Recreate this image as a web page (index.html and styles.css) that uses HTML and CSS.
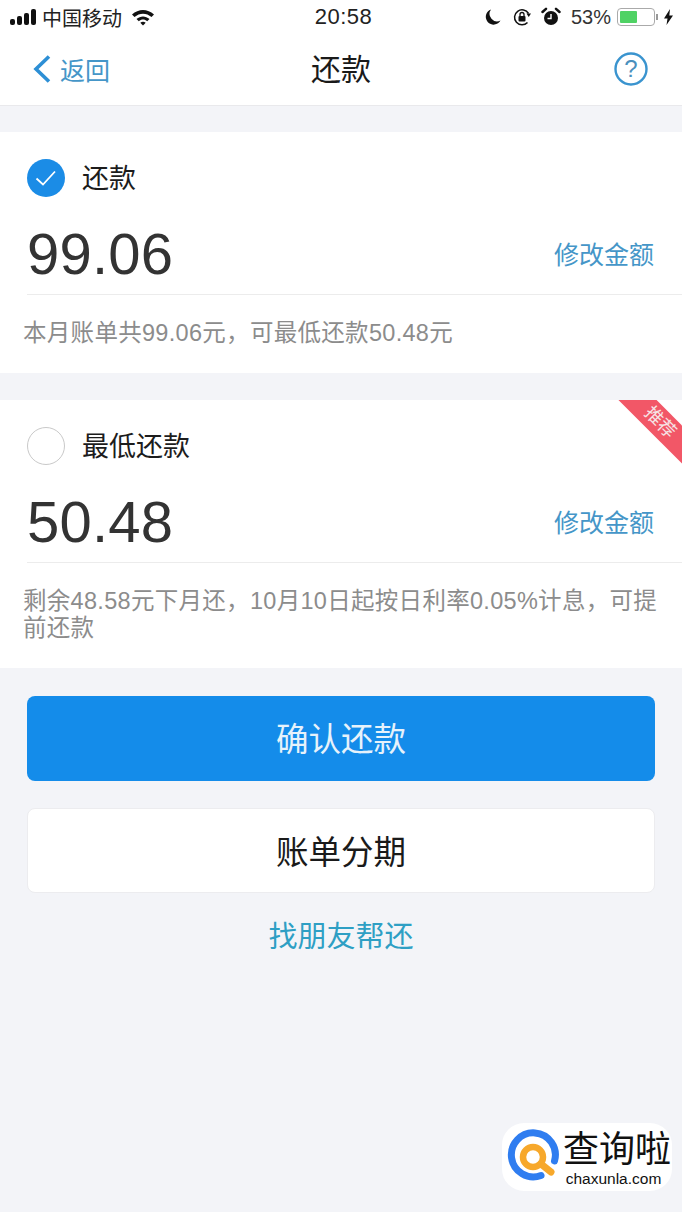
FILE: index.html
```html
<!DOCTYPE html>
<html lang="zh-CN">
<head>
    <meta charset="UTF-8">
    <title>还款</title>
    <link rel="stylesheet" href="styles.css">
</head>
<body>
<div class="statusbar">
    <div class="status-left">
        <span class="signal"><i class="b1"></i><i class="b2"></i><i class="b3"></i><i class="b4"></i></span>
        <span class="carrier">中国移动</span>
        <svg class="wifi" width="24" height="18" viewBox="0 0 24 18">
            <path d="M1 6.5C7.500 .5 16.500 .5 23 6.500L20.500 9C15.500 4.500 8.500 4.500 3.500 9Z" fill="#111"/>
            <path d="M5.500 11C9.500 7.500 14.500 7.500 18.500 11L16.200 13.300C13.500 11 10.500 11 7.800 13.300Z" fill="#111"/>
            <path d="M9.300 14.800C11 13.500 13 13.500 14.700 14.800L12 17.500Z" fill="#111"/>
        </svg>
    </div>
    <div class="status-time">20:58</div>
    <div class="status-right">
        <svg width="18" height="18" viewBox="0 0 18 18"><path d="M7 1.500A7.800 7.800 0 1 0 16.500 12.500A7.500 7.500 0 0 1 7 1.500Z" fill="#111"/></svg>
        <svg class="lock" width="20" height="20" viewBox="0 0 20 20">
            <path d="M16.500 6.500A7.500 7.500 0 1 0 15.500 15.500" fill="none" stroke="#111" stroke-width="1.500"/>
            <path d="M14.500 6.500L19 6.500L16.700 10Z" fill="#111"/>
            <rect x="6.500" y="9" width="7" height="5.500" rx="1" fill="#111"/>
            <path d="M8 9V7.500A2 2 0 0 1 12 7.500V9" fill="none" stroke="#111" stroke-width="1.300"/>
        </svg>
        <svg class="alarm" width="20" height="20" viewBox="0 0 20 20">
            <circle cx="10" cy="11" r="7" fill="#111"/>
            <path d="M10 7V11.500H6.500" fill="none" stroke="#fff" stroke-width="1.400"/>
            <path d="M1.500 5L5 1.800M18.500 5L15 1.800" stroke="#111" stroke-width="2.500" stroke-linecap="round"/>
        </svg>
        <span class="percent">53%</span>
        <span class="battery"><i></i></span>
        <span class="battery-tip"></span>
        <svg width="11" height="18" viewBox="0 0 11 18"><path d="M7 1L1 10.500H4.500L3.500 17L10 7.500H6.300Z" fill="#111"/></svg>
    </div>
</div>

<div class="navbar">
    <div class="back">
        <svg width="20" height="30" viewBox="0 0 20 30"><path d="M17 2.500L4 15L17 27.500" fill="none" stroke="#2d8fd5" stroke-width="3.600"/></svg>
        <span>返回</span>
    </div>
    <div class="nav-title">还款</div>
    <svg class="help" width="36" height="36" viewBox="0 0 36 36">
        <circle cx="18" cy="18" r="15.500" fill="none" stroke="#3a94cf" stroke-width="2.400"/>
        <text x="18" y="25.500" text-anchor="middle" class="help-mark">?</text>
    </svg>
</div>

<div class="card card-first">
    <div class="choice">
        <span class="radio checked">
            <svg width="38" height="38" viewBox="0 0 38 38"><path d="M9.500 19.500L16 25.500L28 12.500" fill="none" stroke="#fff" stroke-width="1.800"/></svg>
        </span>
        <span class="choice-name">还款</span>
    </div>
    <div class="amount-row">
        <span class="amount">99.06</span>
        <span class="edit">修改金额</span>
    </div>
    <div class="hint">本月账单共99.06元，可最低还款50.48元</div>
</div>

<div class="card card-second">
    <div class="ribbon"><span>推荐</span></div>
    <div class="choice">
        <span class="radio"></span>
        <span class="choice-name">最低还款</span>
    </div>
    <div class="amount-row">
        <span class="amount">50.48</span>
        <span class="edit">修改金额</span>
    </div>
    <div class="hint">剩余48.58元下月还，10月10日起按日利率0.05%计息，可提前还款</div>
</div>

<div class="actions">
    <div class="btn btn-primary">确认还款</div>
    <div class="btn btn-white">账单分期</div>
    <div class="friend">找朋友帮还</div>
</div>

<div class="watermark">
    <svg width="62" height="62" viewBox="0 0 62 62">
        <path d="M48.500 35A22 22 0 1 0 35 49.500" fill="none" stroke="#2f7df0" stroke-width="7" stroke-linecap="round"/>
        <circle cx="27" cy="31" r="10" fill="none" stroke="#f7a82b" stroke-width="6.500"/>
        <path d="M35 38L45 46" stroke="#f7a82b" stroke-width="7" stroke-linecap="round"/>
    </svg>
    <div class="wm-text">
        <div class="wm-name">查询啦</div>
        <div class="wm-url">chaxunla.com</div>
    </div>
</div>
</body>
</html>
```

FILE: styles.css
```css
* {
    box-sizing: border-box;
}

html, body {
    margin: 0;
    padding: 0;
}

body {
    position: relative;
    width: 682px;
    height: 1212px;
    overflow: hidden;
    background: #f3f4f8;
    color: #111;
    font-family: "Liberation Sans", "Noto Sans CJK SC", sans-serif;
}

/* status bar */
.statusbar {
    display: flex;
    justify-content: space-between;
    align-items: center;
    height: 34px;
    padding: 0 8px 0 10px;
    background: #fff;
    font-size: 20px;
    position: relative;
}

.status-left, .status-right {
    display: flex;
    align-items: center;
}

.signal {
    display: flex;
    align-items: flex-end;
    gap: 2px;
    height: 16px;
    margin-right: 6px;
}

.signal i {
    display: block;
    width: 5px;
    background: #111;
    border-radius: 2px;
}

.signal .b1 { height: 6px; }
.signal .b2 { height: 9px; }
.signal .b3 { height: 12px; }
.signal .b4 { height: 16px; }

.carrier {
    font-size: 20px;
    color: #222;
}

.wifi {
    margin-left: 9px;
}

.status-time {
    position: absolute;
    left: 5px;
    right: 0;
    text-align: center;
    font-size: 22px;
    letter-spacing: .5px;
    color: #222;
}

.status-right svg {
    margin-left: 8px;
}

.status-right .lock {
    margin-left: 10px;
}

.status-right .alarm {
    margin-left: 9px;
}

.percent {
    margin-left: 10px;
    font-size: 20px;
    color: #333;
}

.battery {
    display: block;
    width: 38px;
    height: 18px;
    margin-left: 6px;
    padding: 2px;
    border: 1px solid #aaa;
    border-radius: 4px;
}

.battery i {
    display: block;
    width: 52%;
    height: 100%;
    background: #4fd264;
    border-radius: 1px;
}

.battery-tip {
    width: 2px;
    height: 6px;
    margin-left: 1px;
    background: #999;
}

.status-right svg:last-child {
    margin-left: 5px;
}

/* nav */
.navbar {
    display: flex;
    align-items: center;
    justify-content: space-between;
    height: 72px;
    padding: 0 33px 1px 32px;
    background: #fff;
    border-bottom: 1px solid #e9e9ec;
    position: relative;
}

.back {
    display: flex;
    align-items: center;
    color: #4596c8;
    font-size: 25px;
}

.back svg {
    margin-right: 8px;
}

.nav-title {
    position: absolute;
    left: 0;
    right: 0;
    top: 11px;
    text-align: center;
    font-size: 30px;
    color: #1a1a1a;
}

.help-mark {
    font-size: 24px;
    fill: #4a8fbd;
    font-family: "Liberation Sans", sans-serif;
}

/* cards */
.card {
    position: relative;
    overflow: hidden;
    background: #fff;
}

.card-first {
    height: 241px;
    margin-top: 26px;
}

.card-second {
    height: 268px;
    margin-top: 27px;
}

.choice {
    display: flex;
    align-items: center;
    height: 38px;
    margin: 27px 0 0 27px;
}

.radio {
    display: block;
    width: 38px;
    height: 38px;
    border: 1.500px solid #c9c9c9;
    border-radius: 50%;
}

.radio.checked {
    background: #1b8ce6;
    border: 0;
}

.radio.checked svg {
    display: block;
}

.choice-name {
    margin-left: 17px;
    padding-bottom: 4px;
    font-size: 27px;
    color: #1c1c1c;
}

.amount-row {
    display: flex;
    align-items: center;
    justify-content: space-between;
    height: 87px;
    margin: 11px 0 0 27px;
    padding: 4px 28px 0 0;
    border-bottom: 1px solid #ececec;
}

.amount {
    font-size: 58px;
    letter-spacing: .2px;
    color: #333;
}

.edit {
    font-size: 25px;
    color: #4596c8;
}

.hint {
    margin: 25px 16px 0 23px;
    font-size: 23.500px;
    letter-spacing: .3px;
    line-height: 27px;
    color: #8c8c8c;
}

.ribbon {
    position: absolute;
    top: 9px;
    right: -38px;
    width: 120px;
    height: 27px;
    transform: rotate(45deg);
    background: #f25767;
    color: #f6e4e6;
    font-size: 18px;
    text-align: center;
    line-height: 27px;
}

/* buttons */
.actions {
    padding: 28px 27px 0;
}

.btn {
    height: 85px;
    border-radius: 8px;
    text-align: center;
    line-height: 88px;
    font-size: 32.500px;
}

.btn-primary {
    background: #148cea;
    color: #e6f2fb;
}

.btn-white {
    margin-top: 27px;
    background: #fff;
    color: #1a1a1a;
    border: 1px solid #ececef;
}

.friend {
    margin-top: 20px;
    text-align: center;
    font-size: 29px;
    color: #2e9fc4;
}

/* watermark */
.watermark {
    position: absolute;
    left: 502px;
    top: 1123px;
    display: flex;
    align-items: center;
    width: 170px;
    height: 68px;
    padding-left: 4px;
    background: #fff;
    border-radius: 22px;
}

.wm-text {
    margin: 3px 0 0 -5px;
    text-align: center;
}

.wm-name {
    font-size: 36px;
    line-height: 40px;
    color: #111;
    font-family: "Liberation Serif", "Noto Sans CJK SC", serif;
}

.wm-url {
    padding-right: 7px;
    font-size: 15.500px;
    line-height: 17px;
    color: #111;
}
```
